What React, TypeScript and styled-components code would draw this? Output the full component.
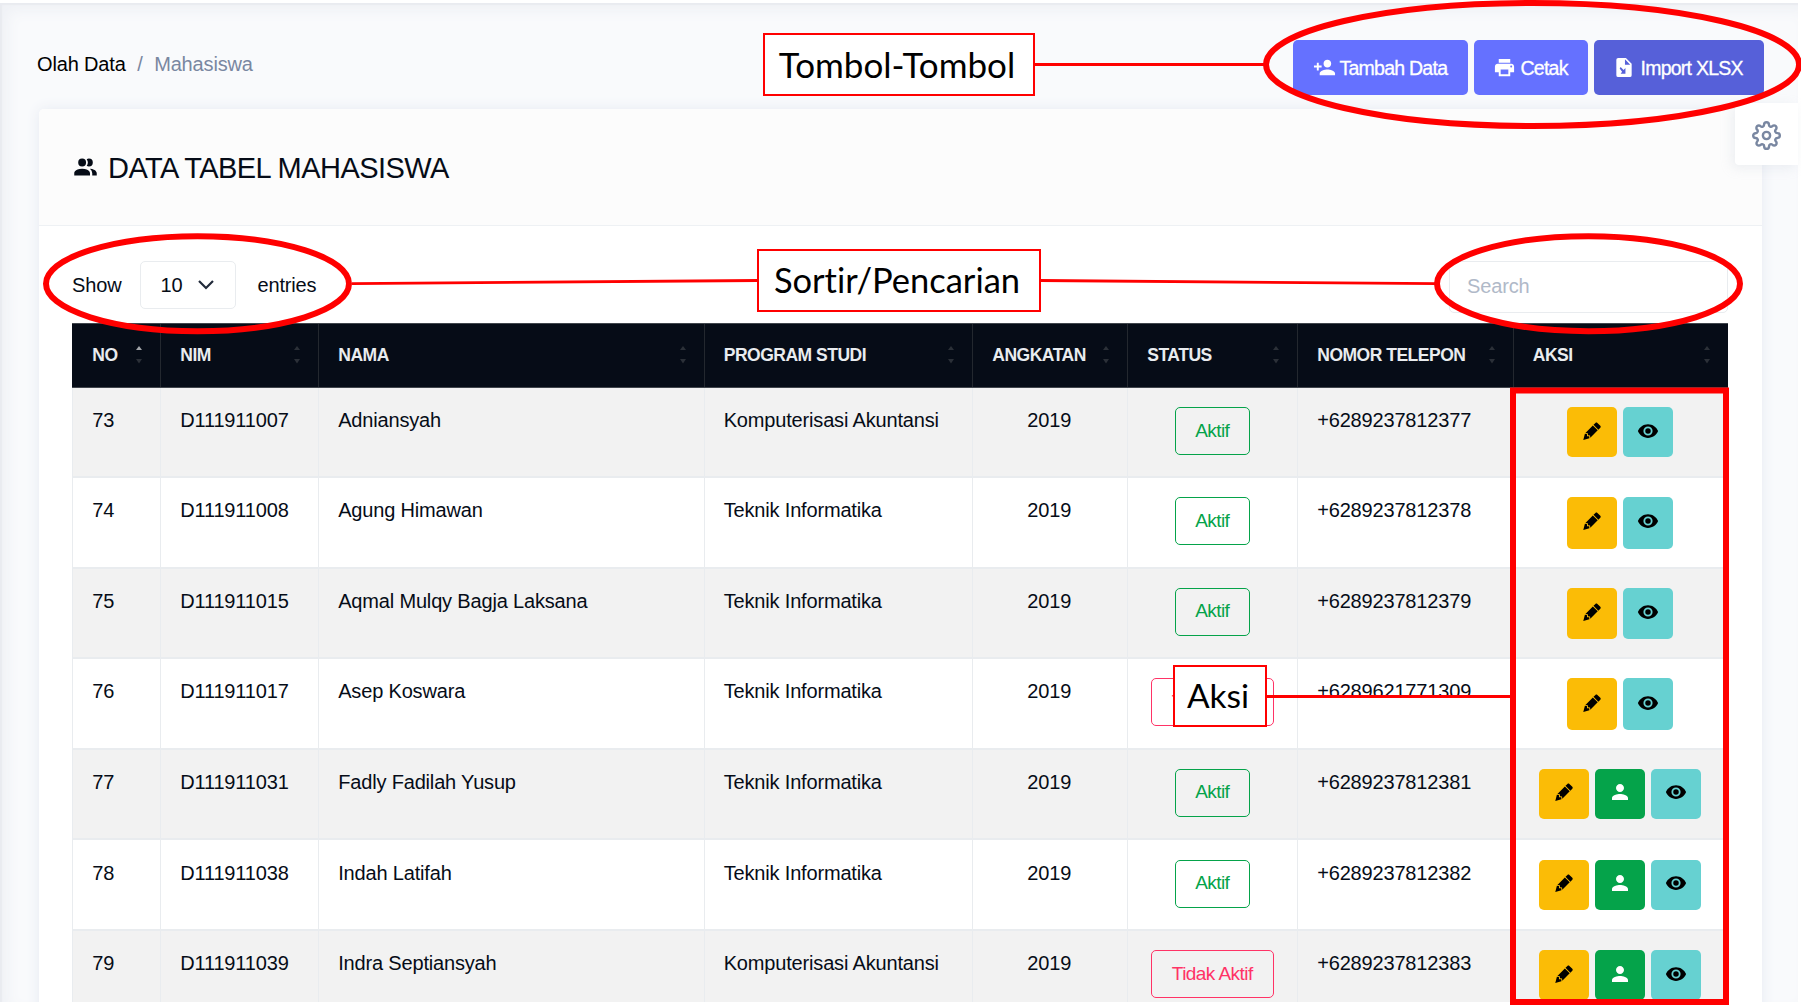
import React from "react";
import styled, { createGlobalStyle } from "styled-components";
import { FiSettings } from "react-icons/fi";
import { MdPersonAdd, MdPrint, MdPerson } from "react-icons/md";

const GlobalStyle = createGlobalStyle`
  * { box-sizing: border-box; }
  body {
    margin: 0;
    background: #fff;
    color: #060c17;
    font-family: "Liberation Sans", Arial, sans-serif;
    font-size: 20px;
    line-height: 24px;
    overflow: hidden;
  }
`;

const Screen = styled.div`
  position: relative;
  width: 1801px;
  height: 1005px;
  padding-top: 3px;
  overflow: hidden;
`;

const Page = styled.main`
  width: 1798px;
  height: 999px;
  overflow: hidden;
  background: #f9fafc;
  box-shadow: inset 2px 2px 1px #e9ebf0, inset 8px 8px 14px #eff1f5;
`;

const TopBar = styled.header`
  display: flex;
  justify-content: space-between;
  align-items: flex-start;
  height: 106px;
  padding: 37px 34.5px 0 37px;
`;

const Breadcrumb = styled.nav`
  display: flex;
  gap: 11.5px;
  padding-top: 12px;
  letter-spacing: -0.15px;
`;

const Crumb = styled.span<{ $muted?: boolean }>`
  color: ${(p) => (p.$muted ? "#7987a1" : "#000")};
`;

const ButtonBar = styled.div`
  display: flex;
  gap: 6px;
`;

const Button = styled.button<{ $width: number; $pad: number; $dark?: boolean }>`
  display: flex;
  align-items: center;
  width: ${(p) => p.$width}px;
  height: 55px;
  padding: 0 0 0 ${(p) => p.$pad}px;
  border: 0;
  border-radius: 5px;
  background: ${(p) => (p.$dark ? "#5660d9" : "#6571ff")};
  color: #fff;
  font: 19.5px "Liberation Sans", Arial, sans-serif;
  -webkit-text-stroke: 0.3px #fff;
  letter-spacing: -0.75px;
  white-space: nowrap;

  svg { flex: none; stroke: none; }
`;

const ButtonText = styled.span<{ $gap: number }>`
  margin-left: ${(p) => p.$gap}px;
  padding-top: 1px;
`;

const Card = styled.section`
  width: 1723px;
  height: 960px;
  margin-left: 39px;
  border-radius: 5px;
  background: #fff;
  box-shadow: 0 0 14px #e6eaf2;
`;

const CardHeader = styled.div`
  display: flex;
  align-items: center;
  height: 117px;
  padding: 0 0 0 33px;
  border-bottom: 1px solid #eef1f4;
  border-radius: 5px 5px 0 0;
  background: #fcfcfc;
`;

const Title = styled.h1`
  margin: 1px 0 0 9px;
  font-size: 29px;
  font-weight: 400;
  line-height: 36px;
  letter-spacing: -0.55px;
  white-space: nowrap;
`;

const Controls = styled.div`
  display: flex;
  justify-content: space-between;
  height: 97px;
  padding: 35px 34px 0 33px;
`;

const LengthControl = styled.label`
  display: flex;
  align-items: center;
  height: 48px;
  letter-spacing: -0.15px;
`;

const Select = styled.span`
  display: flex;
  align-items: center;
  justify-content: space-between;
  width: 96px;
  height: 48px;
  margin: 0 21px 0 19px;
  padding: 0 21px 0 19px;
  border: 1.5px solid #e9ecef;
  border-radius: 5px;
`;

const SearchBox = styled.div`
  display: flex;
  align-items: center;
  width: 279px;
  height: 52px;
  padding: 0 0 2px 17px;
  border: 1.5px solid #e9ecef;
  border-radius: 5px;
  color: #b0b9c8;
  letter-spacing: -0.15px;
`;

const Table = styled.div`
  width: 1656px;
  margin-left: 33px;
`;

const columns = "88px 158px 385.5px 268.5px 155px 170px 215.5px 215.5px";

const HeadRow = styled.div`
  display: grid;
  grid-template-columns: ${columns};
  height: 64.5px;
  border-top: 1px solid #41464d;
  border-bottom: 1px solid #41464d;
  background: #060c17;
`;

const HeadCell = styled.div`
  display: flex;
  align-items: center;
  justify-content: space-between;
  padding: 0 16px 0 19.3px;
  border-left: 1.5px solid #23282f;
  color: #e9ecef;
  font-size: 17.5px;
  font-weight: 700;
  letter-spacing: -0.5px;
  white-space: nowrap;

  &:first-child { border-left-color: #060c17; }
`;

const Row = styled.div<{ $striped: boolean; $first: boolean }>`
  display: grid;
  grid-template-columns: ${columns};
  height: ${(p) => (p.$first ? 90 : 90.6)}px;
  margin-top: ${(p) => (p.$first ? 0.5 : 0)}px;
  border-bottom: 2px solid #e9ecef;
  background: ${(p) => (p.$striped ? "#f2f2f2" : "#fff")};
`;

const Cell = styled.div<{ $center?: boolean }>`
  display: flex;
  align-items: flex-start;
  justify-content: ${(p) => (p.$center ? "center" : "flex-start")};
  gap: 6px;
  padding: 20.3px ${(p) => (p.$center ? "1.5px 0 0" : "0 0 19.2px")};
  border-left: 1.5px solid #e9ecef;
  letter-spacing: -0.17px;
  white-space: nowrap;
`;

const WidgetCell = styled(Cell)`
  padding-top: 19.2px;
`;

const Badge = styled.span<{ $active: boolean }>`
  display: flex;
  align-items: center;
  justify-content: center;
  width: ${(p) => (p.$active ? 75 : 123)}px;
  height: 48px;
  padding-bottom: 1px;
  margin-left: 1px;
  border: 1.5px solid ${(p) => (p.$active ? "#05a34a" : "#ff3366")};
  border-radius: 5px;
  color: ${(p) => (p.$active ? "#05a34a" : "#ff3366")};
  font-size: 19px;
  letter-spacing: -0.55px;
`;

const ActionButton = styled.span<{ $color: string; $tall: boolean }>`
  display: flex;
  align-items: center;
  justify-content: center;
  width: 50px;
  height: ${(p) => (p.$tall ? 51.5 : 50)}px;
  border-radius: 5px;
  padding-bottom: 3px;
  background: ${(p) => p.$color};
`;

const SettingsTab = styled.div`
  position: absolute;
  top: 103px;
  left: 1735px;
  display: flex;
  align-items: center;
  justify-content: center;
  width: 63px;
  height: 62px;
  padding-top: 3px;
  border-radius: 4px 0 0 4px;
  background: #fff;
  color: #7987a1;
  box-shadow: -3px 3px 12px rgba(183, 192, 206, 0.22);
`;

const Annotations = styled.svg`
  position: absolute;
  inset: 0;
  pointer-events: none;
`;

const Callout = styled.div<{ $x: number; $y: number; $w: number; $h: number; $size?: number }>`
  position: absolute;
  left: ${(p) => p.$x}px;
  top: ${(p) => p.$y}px;
  display: flex;
  align-items: center;
  justify-content: center;
  width: ${(p) => p.$w}px;
  height: ${(p) => p.$h}px;
  padding: 0 4px 2px 0;
  border: 2px solid #ff0000;
  background: #fff;
  color: #000;
  font: ${(p) => p.$size ?? 34.5}px/40px Lato, "Open Sans", sans-serif;
  font-variant-ligatures: none;
  white-space: nowrap;
`;

const PeopleIcon = () => (
  <svg width="27" height="27" viewBox="0 0 24 24" fill="#060c17">
    <path d="M16 17V19H2V17S2 13 9 13 16 17 16 17M12.5 7.5A3.5 3.5 0 1 0 9 11A3.5 3.5 0 0 0 12.5 7.5M15.94 13A5.32 5.32 0 0 1 18 17V19H22V17S22 13.37 15.94 13M15 4A3.39 3.39 0 0 0 13.07 4.59A5 5 0 0 1 13.07 10.41A3.39 3.39 0 0 0 15 11A3.5 3.5 0 0 0 15 4Z" />
  </svg>
);

const FileImportIcon = () => (
  <svg width="24" height="23" viewBox="0 0 24 24" fill="#fff">
    <path
      fillRule="evenodd"
      d="M6 2A2 2 0 0 0 4 4V20A2 2 0 0 0 6 22H18A2 2 0 0 0 20 20V8L14 2ZM13 3.5L18.500 9H13ZM8.500 11.500L11.500 14.500L13.500 12.500V18.500H8.500L10 16.500L7.500 13Z"
    />
  </svg>
);

const PencilIcon = () => (
  <svg width="22" height="22" viewBox="0 0 24 24" fill="#000">
    <path d="M16.84 2.73C16.45 2.73 16.07 2.88 15.77 3.17L13.65 5.29L18.95 10.6L21.07 8.5C21.67 7.89 21.67 6.94 21.07 6.36L17.9 3.17C17.6 2.88 17.22 2.73 16.84 2.73M12.94 6L4.84 14.11L7.4 14.39L7.58 16.68L9.86 16.85L10.15 19.41L18.25 11.3M4.25 15.04L2.5 21.73L9.2 19.94L8.96 17.78L6.65 17.61L6.47 15.29" />
  </svg>
);

const EyeIcon = () => (
  <svg width="22" height="22" viewBox="0 0 24 24" fill="#000">
    <path d="M12 9A3 3 0 0 0 9 12A3 3 0 0 0 12 15A3 3 0 0 0 15 12A3 3 0 0 0 12 9M12 17A5 5 0 0 1 7 12A5 5 0 0 1 12 7A5 5 0 0 1 17 12A5 5 0 0 1 12 17M12 4.5C7 4.5 2.73 7.61 1 12C2.73 16.39 7 19.5 12 19.5C17 19.5 21.27 16.39 23 12C21.27 7.61 17 4.5 12 4.5Z" />
  </svg>
);

const SortIcon = ({ ascending }: { ascending?: boolean }) => (
  <svg width="10" height="20" viewBox="0 0 10 20">
    <path d="M2 5L5 1L8 5Z" fill={ascending ? "#a3a6aa" : "#2b3038"} />
    <path d="M2 14L5 18.500L8 14Z" fill="#2b3038" />
  </svg>
);

const headings = ["NO", "NIM", "NAMA", "PROGRAM STUDI", "ANGKATAN", "STATUS", "NOMOR TELEPON", "AKSI"];

interface Student {
  no: number;
  nim: string;
  name: string;
  program: string;
  phone: string;
  active: boolean;
  account: boolean;
}

const students: Student[] = [
  { no: 73, nim: "D111911007", name: "Adniansyah", program: "Komputerisasi Akuntansi", phone: "+6289237812377", active: true, account: false },
  { no: 74, nim: "D111911008", name: "Agung Himawan", program: "Teknik Informatika", phone: "+6289237812378", active: true, account: false },
  { no: 75, nim: "D111911015", name: "Aqmal Mulqy Bagja Laksana", program: "Teknik Informatika", phone: "+6289237812379", active: true, account: false },
  { no: 76, nim: "D111911017", name: "Asep Koswara", program: "Teknik Informatika", phone: "+6289621771309", active: false, account: false },
  { no: 77, nim: "D111911031", name: "Fadly Fadilah Yusup", program: "Teknik Informatika", phone: "+6289237812381", active: true, account: true },
  { no: 78, nim: "D111911038", name: "Indah Latifah", program: "Teknik Informatika", phone: "+6289237812382", active: true, account: true },
  { no: 79, nim: "D111911039", name: "Indra Septiansyah", program: "Komputerisasi Akuntansi", phone: "+6289237812383", active: false, account: true },
];

const StudentRow = ({ student, index }: { student: Student; index: number }) => {
  const tall = index > 0 && index < 4;
  return (
    <Row $striped={index % 2 === 0} $first={index === 0}>
      <Cell>{student.no}</Cell>
      <Cell>{student.nim}</Cell>
      <Cell>{student.name}</Cell>
      <Cell>{student.program}</Cell>
      <Cell $center>2019</Cell>
      <WidgetCell $center>
        <Badge $active={student.active}>{student.active ? "Aktif" : "Tidak Aktif"}</Badge>
      </WidgetCell>
      <Cell>{student.phone}</Cell>
      <WidgetCell $center>
        <ActionButton $color="#fbbc06" $tall={tall}><PencilIcon /></ActionButton>
        {student.account && (
          <ActionButton $color="#05a34a" $tall={tall}><MdPerson size={24} color="#fff" /></ActionButton>
        )}
        <ActionButton $color="#66d1d1" $tall={tall}><EyeIcon /></ActionButton>
      </WidgetCell>
    </Row>
  );
};

export default function App() {
  return (
    <Screen>
      <GlobalStyle />
      <Page>
        <TopBar>
          <Breadcrumb>
            <Crumb>Olah Data</Crumb>
            <Crumb $muted>/</Crumb>
            <Crumb $muted>Mahasiswa</Crumb>
          </Breadcrumb>
          <ButtonBar>
            <Button $width={175} $pad={20}>
              <MdPersonAdd size={23} />
              <ButtonText $gap={4}>Tambah Data</ButtonText>
            </Button>
            <Button $width={114} $pad={19}>
              <MdPrint size={23} />
              <ButtonText $gap={5}>Cetak</ButtonText>
            </Button>
            <Button $width={170} $pad={18} $dark>
              <FileImportIcon />
              <ButtonText $gap={5}>Import XLSX</ButtonText>
            </Button>
          </ButtonBar>
        </TopBar>
        <Card>
          <CardHeader>
            <PeopleIcon />
            <Title>DATA TABEL MAHASISWA</Title>
          </CardHeader>
          <Controls>
            <LengthControl>
              Show
              <Select>
                10
                <svg width="16" height="10" viewBox="0 0 16 10" fill="none" stroke="#212a3a" strokeWidth="2.2">
                  <path d="M1 1L8 8L15 1" />
                </svg>
              </Select>
              entries
            </LengthControl>
            <SearchBox>Search</SearchBox>
          </Controls>
          <Table>
            <HeadRow>
              {headings.map((heading, i) => (
                <HeadCell key={heading}>
                  {heading}
                  <SortIcon ascending={i === 0} />
                </HeadCell>
              ))}
            </HeadRow>
            {students.map((student, i) => (
              <StudentRow key={student.no} student={student} index={i} />
            ))}
          </Table>
        </Card>
      </Page>
      <SettingsTab>
        <FiSettings size={29} />
      </SettingsTab>
      <Annotations width="1801" height="1005" viewBox="0 0 1801 1005" fill="none" stroke="#ff0000">
        <ellipse cx="1532.500" cy="64.500" rx="266.500" ry="61.500" strokeWidth="6" />
        <ellipse cx="197.500" cy="283.700" rx="151.500" ry="47.500" strokeWidth="6" />
        <ellipse cx="1588.500" cy="283.700" rx="151.500" ry="47.500" strokeWidth="6" />
        <rect x="1513" y="390.500" width="213" height="611.500" strokeWidth="6" />
        <path d="M1034 64.500H1266M352 283.600L758 280.500M1040 280.500L1437 283.600M1266 696.500H1512" strokeWidth="2.800" />
      </Annotations>
      <Callout $x={763} $y={33} $w={272} $h={63} $size={35}>Tombol-Tombol</Callout>
      <Callout $x={757} $y={249} $w={284} $h={63}>Sortir/Pencarian</Callout>
      <Callout $x={1173} $y={665} $w={94} $h={62} $size={33.5}>Aksi</Callout>
    </Screen>
  );
}
